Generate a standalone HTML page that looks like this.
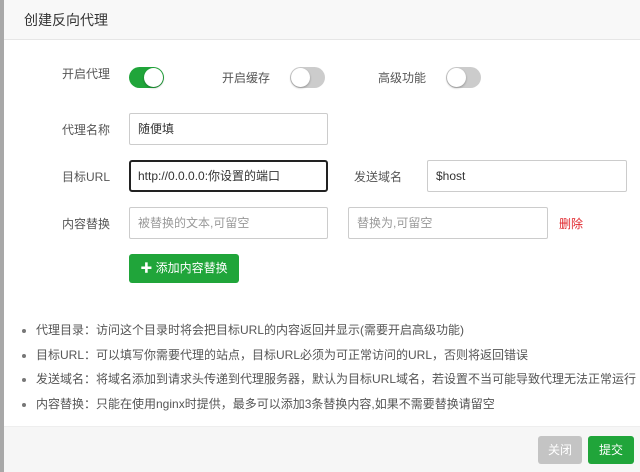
<!DOCTYPE html>
<html><head><meta charset="utf-8"><style>
*{margin:0;padding:0;box-sizing:border-box}
body{width:640px;height:472px;position:relative;overflow:hidden;background:#fff;font-family:"Liberation Sans","Noto Sans CJK SC",sans-serif;color:#333;font-size:12px}
.strip{position:absolute;left:0;top:0;width:4px;height:472px;background:#a8a8a8}
.hdr{position:absolute;left:4px;top:0;right:0;height:40px;background:#f8f8f8;border-bottom:1px solid #e6e6e6;font-size:14px;line-height:40px;padding-left:20px;color:#333}
.lbl{position:absolute;font-size:12px;color:#555}
.tg{position:absolute;width:35px;height:21px;border-radius:11px;background:#ccc}
.tg.on{background:#20a53a}
.tg::after{content:"";position:absolute;top:1px;width:19px;height:19px;border-radius:50%;background:#fff;box-shadow:0 1px 2px rgba(0,0,0,.3)}
.tg.on::after{right:1px}.tg:not(.on)::after{left:1px}
.in{position:absolute;height:32px;border:1px solid #ccc;border-radius:2px;font-size:12px;line-height:30px;padding-left:8px;color:#333}
.ph{color:#999}
.btn{position:absolute;color:#fff;border-radius:3px;font-size:12px;text-align:center}
ul{position:absolute;left:22px;top:320px;list-style:none}
li{height:24.7px;line-height:20px;color:#555;font-size:12px;position:relative;padding-left:14px;white-space:nowrap}
li::before{content:"";position:absolute;left:0;top:9px;width:4px;height:4px;border-radius:50%;background:#777}
.ftr{position:absolute;left:4px;right:0;top:426px;bottom:0;background:#f6f6f6;border-top:1px solid #eee}
</style></head><body>
<div class="strip"></div>
<div class="hdr">创建反向代理</div>
<div class="lbl" style="left:62px;top:65px">开启代理</div>
<div class="tg on" style="left:129px;top:67px"></div>
<div class="lbl" style="left:222px;top:69px">开启缓存</div>
<div class="tg" style="left:290px;top:67px"></div>
<div class="lbl" style="left:378px;top:69px">高级功能</div>
<div class="tg" style="left:446px;top:67px"></div>

<div class="lbl" style="left:62px;top:121px">代理名称</div>
<div class="in" style="left:129px;top:113px;width:199px">随便填</div>

<div class="lbl" style="left:62px;top:168px">目标URL</div>
<div class="in" style="left:129px;top:160px;width:199px;border:2px solid #222;border-radius:3px;line-height:28px;padding-left:7px">http://0.0.0.0:你设置的端口</div>
<div class="lbl" style="left:354px;top:168px">发送域名</div>
<div class="in" style="left:427px;top:160px;width:200px">$host</div>

<div class="lbl" style="left:62px;top:215px">内容替换</div>
<div class="in ph" style="left:129px;top:207px;width:199px">被替换的文本,可留空</div>
<div class="in ph" style="left:348px;top:207px;width:200px">替换为,可留空</div>
<div class="lbl" style="left:559px;top:215px;color:#e0262c">删除</div>

<div class="btn" style="left:129px;top:254px;width:110px;height:29px;line-height:29px;background:#20a53a"><b style="font-size:12px">✚</b>&nbsp;添加内容替换</div>

<ul>
<li>代理目录：访问这个目录时将会把目标URL的内容返回并显示(需要开启高级功能)</li>
<li>目标URL：可以填写你需要代理的站点，目标URL必须为可正常访问的URL，否则将返回错误</li>
<li>发送域名：将域名添加到请求头传递到代理服务器，默认为目标URL域名，若设置不当可能导致代理无法正常运行</li>
<li>内容替换：只能在使用nginx时提供，最多可以添加3条替换内容,如果不需要替换请留空</li>
</ul>
<div class="ftr"></div>
<div class="btn" style="left:538px;top:436px;width:44px;height:28px;line-height:28px;background:#c4c4c4">关闭</div>
<div class="btn" style="left:588px;top:436px;width:46px;height:28px;line-height:28px;background:#20a53a">提交</div>
</body></html>
